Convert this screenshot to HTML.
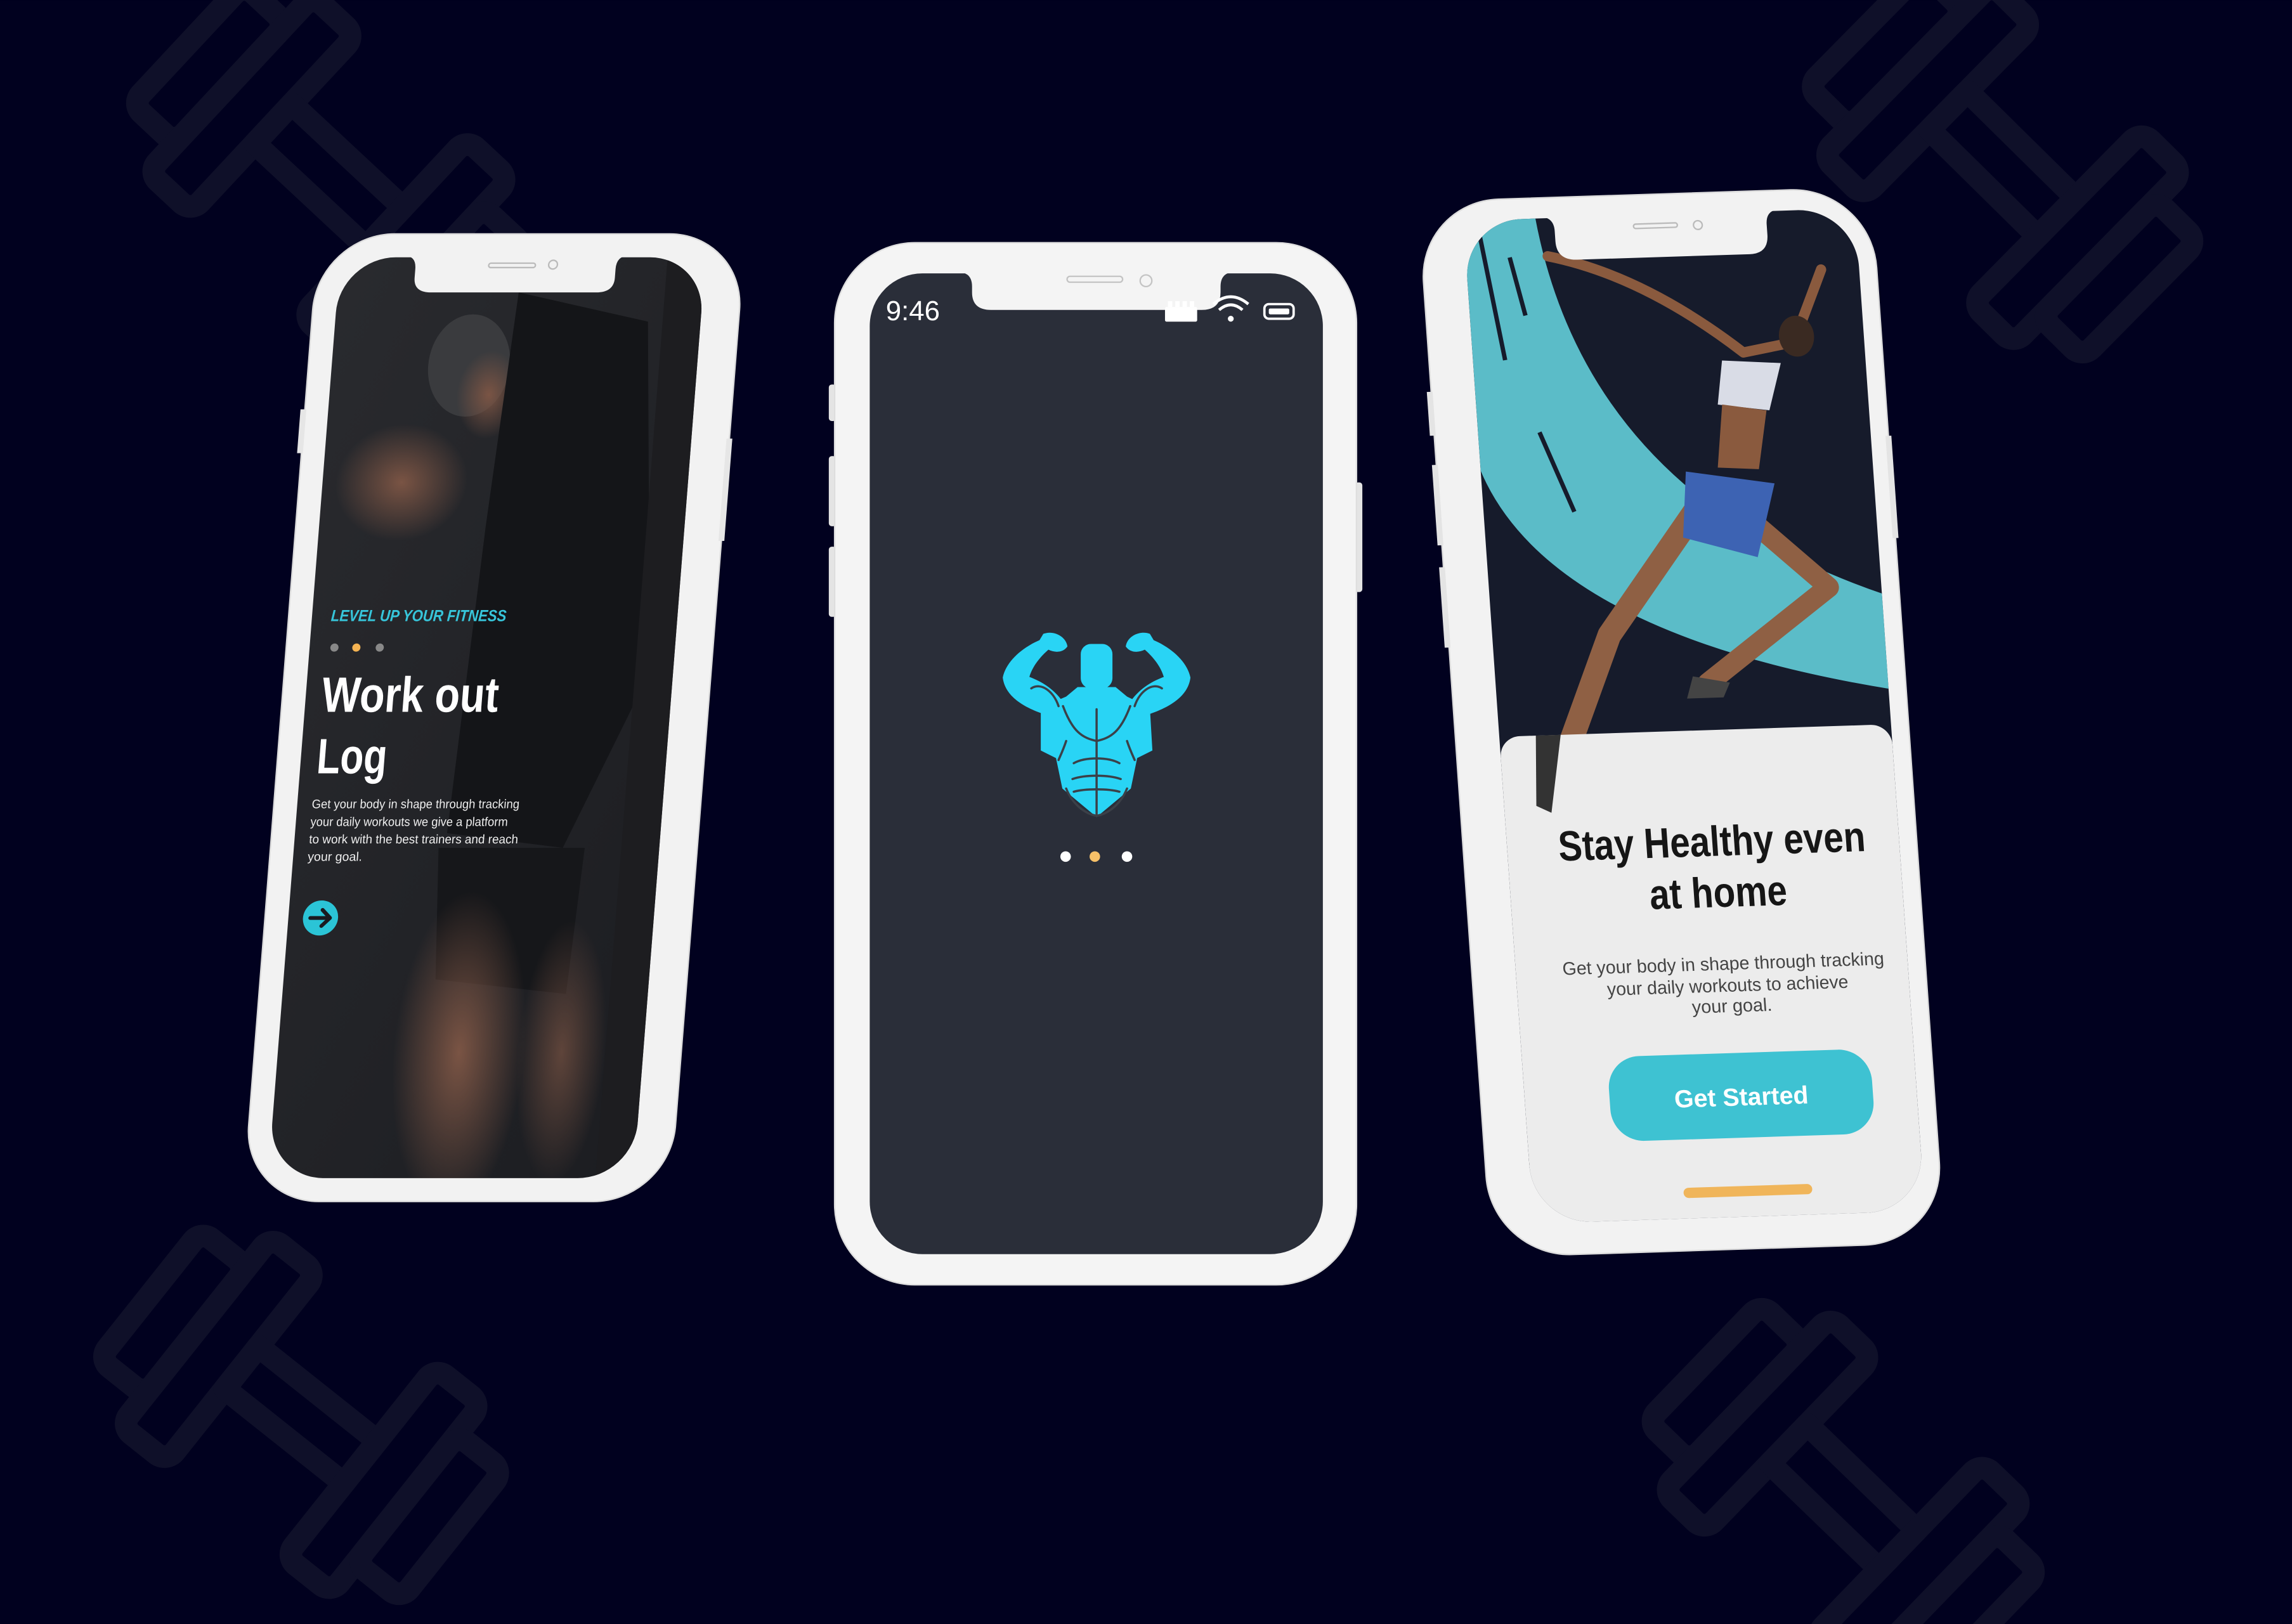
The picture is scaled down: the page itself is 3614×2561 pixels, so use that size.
<!DOCTYPE html>
<html><head><meta charset="utf-8"><style>
html,body{margin:0;padding:0;background:#01011f;width:3614px;height:2561px;overflow:hidden;}
svg{display:block;}
text{font-family:"Liberation Sans",sans-serif;}
</style></head><body>
<svg width="3614" height="2561" viewBox="0 0 1568 1111" xmlns="http://www.w3.org/2000/svg">
<defs>
<g id="db" fill="none" stroke="#0f1029" stroke-width="15.5" stroke-linejoin="round">
<rect x="-132" y="-56" width="40" height="112" rx="9"/>
<rect x="-92" y="-82.5" width="40" height="165" rx="9"/>
<rect x="-52" y="-18.5" width="104" height="37"/>
<rect x="52" y="-82.5" width="40" height="165" rx="9"/>
<rect x="92" y="-56" width="40" height="112" rx="9"/>
</g>
<clipPath id="lclip"><rect x="16" y="16" width="250" height="630" rx="38"/></clipPath>
<clipPath id="rclip"><rect x="30" y="14" width="268" height="686" rx="40"/></clipPath>
<radialGradient id="skin1" cx="0.5" cy="0.5" r="0.5"><stop offset="0" stop-color="#7a5444"/><stop offset="1" stop-color="#7a5444" stop-opacity="0"/></radialGradient>
<linearGradient id="lbg" x1="0" y1="0" x2="1" y2="1"><stop offset="0" stop-color="#2a2b2f"/><stop offset="1" stop-color="#1b1c20"/></linearGradient>
</defs>
<rect width="1568" height="1111" fill="#01011f"/>
<use href="#db" transform="translate(225,120) rotate(43)"/>
<use href="#db" transform="translate(1370,112) rotate(44.6)"/>
<use href="#db" transform="translate(206,968) rotate(38.5)"/>
<use href="#db" transform="translate(1261,1024) rotate(44)"/>

<!-- LEFT PHONE -->
<g transform="matrix(1,0,-0.0785,1,218,160)">
<rect x="0" y="0" width="292" height="662" rx="52" fill="#f2f2f2" stroke="#dcdcdc" stroke-width="1"/>
<rect x="-3" y="120" width="4" height="30" fill="#e6e6e6"/>
<rect x="290" y="140" width="4" height="70" fill="#e6e6e6"/>
<g clip-path="url(#lclip)">
<rect x="0" y="0" width="292" height="662" fill="url(#lbg)"/>
<ellipse cx="70" cy="170" rx="45" ry="40" fill="url(#skin1)"/>
<ellipse cx="110" cy="90" rx="28" ry="35" fill="#3a3b3e"/>
<ellipse cx="125" cy="110" rx="22" ry="30" fill="url(#skin1)"/>
<path d="M140,40 L230,60 L250,300 L200,420 L120,410 L130,200 Z" fill="#141518"/>
<path d="M115,420 L215,420 L210,520 L120,510 Z" fill="#16171a"/>
<ellipse cx="140" cy="560" rx="45" ry="110" fill="url(#skin1)"/>
<ellipse cx="210" cy="560" rx="30" ry="90" fill="url(#skin1)" opacity="0.7"/>
<rect x="240" y="0" width="30" height="662" fill="#1d1d20"/>
</g>
<path d="M60,15 Q68,15 68,24 L68,30 Q68,40 80,40 L193,40 Q205,40 205,30 L205,24 Q205,15 213,15 Z" fill="#f2f2f2"/>
<rect x="118" y="20" width="32" height="3" rx="1.5" fill="none" stroke="#bbb" stroke-width="1"/>
<circle cx="162" cy="21" r="3" fill="none" stroke="#bbb" stroke-width="1"/>
<text x="29" y="265" font-size="11" font-weight="bold" font-style="italic" fill="#37c5da" textLength="120" lengthAdjust="spacingAndGlyphs">LEVEL UP YOUR FITNESS</text>
<circle cx="33" cy="283" r="2.8" fill="#888"/>
<circle cx="48" cy="283" r="2.8" fill="#f5b352"/>
<circle cx="64" cy="283" r="2.8" fill="#888"/>
<text x="27" y="327" font-size="34" font-weight="bold" fill="#fff" textLength="121" lengthAdjust="spacingAndGlyphs">Work out</text>
<text x="27" y="369" font-size="34" font-weight="bold" fill="#fff" textLength="48" lengthAdjust="spacingAndGlyphs">Log</text>
<g font-size="8.5" fill="#eee">
<text x="26" y="393" textLength="142" lengthAdjust="spacingAndGlyphs">Get your body in shape through tracking</text>
<text x="26" y="405" textLength="135" lengthAdjust="spacingAndGlyphs">your daily workouts we give a platform</text>
<text x="26" y="417" textLength="143" lengthAdjust="spacingAndGlyphs">to work with the best trainers  and reach</text>
<text x="26" y="429">your goal.</text>
</g>
<circle cx="38" cy="468" r="12" fill="#2bc4d6"/>
<path d="M31,468 L44,468 M39,462.5 L44.5,468 L39,473.5" fill="none" stroke="#1a1a1f" stroke-width="2.6" stroke-linecap="round" stroke-linejoin="round"/>
</g>

<!-- CENTER PHONE -->
<rect x="567" y="263" width="5" height="25" rx="2" fill="#e4e4e4"/>
<rect x="567" y="312" width="5" height="48" rx="2" fill="#e4e4e4"/>
<rect x="567" y="374" width="5" height="48" rx="2" fill="#e4e4e4"/>
<rect x="927" y="330" width="5" height="75" rx="2" fill="#e4e4e4"/>
<rect x="571" y="166" width="357" height="713" rx="55" fill="#f4f4f4" stroke="#dedede" stroke-width="1"/>
<rect x="595" y="187" width="310" height="671" rx="36" fill="#2a2e39"/>
<path d="M655,186 Q665,186 665,196 L665,200 Q665,212 678,212 L822,212 Q835,212 835,200 L835,196 Q835,186 845,186 Z" fill="#f4f4f4"/>
<rect x="730" y="189" width="38" height="4" rx="2" fill="none" stroke="#c4c4c4" stroke-width="1"/>
<circle cx="784" cy="192" r="4" fill="none" stroke="#c4c4c4" stroke-width="1"/>
<text x="606" y="219" font-size="19" fill="#fff">9:46</text>
<g fill="#fff">
<rect x="797" y="210" width="22" height="10" rx="1"/>
<rect x="799" y="206" width="3" height="4"/><rect x="804" y="206" width="3" height="4"/><rect x="809" y="206" width="3" height="4"/><rect x="814" y="206" width="3" height="4"/>
<circle cx="842" cy="218" r="2"/>
<path d="M834,212 Q842,205 850,212" fill="none" stroke="#fff" stroke-width="2"/>
<path d="M830,208 Q842,198 854,208" fill="none" stroke="#fff" stroke-width="2"/>
<rect x="865" y="208" width="20" height="10" rx="3" fill="none" stroke="#fff" stroke-width="1.6"/>
<rect x="868" y="211" width="14" height="4" rx="1"/>
</g>
<!-- logo -->
<g transform="translate(686,431) scale(0.4338)">
<g fill="#29d4f5">
<rect x="123" y="22" width="50" height="70" rx="16"/>
<path d="M118,90 L178,90 L196,105 L232,122 L236,190 L212,202 L202,250 L148,295 L94,250 L84,202 L60,190 L60,122 L100,105 Z"/>
<path d="M72,135 C40,125 4,108 0,75 C5,50 30,28 58,16 L64,6 C80,0 100,10 102,26 C95,36 82,36 72,31 C56,45 46,60 42,74 C58,80 78,90 94,112 Z"/>
<path d="M224,135 C256,125 292,108 296,75 C291,50 266,28 238,16 L232,6 C216,0 196,10 194,26 C201,36 214,36 224,31 C240,45 250,60 254,74 C238,80 218,90 202,112 Z"/>
</g>
<g fill="none" stroke="#3b4048" stroke-width="3.5" stroke-linecap="round">
<path d="M95,120 C110,160 125,170 148,175 C171,170 186,160 201,120"/>
<path d="M148,125 L148,290"/>
<path d="M112,210 C130,200 166,200 184,210"/>
<path d="M110,235 C130,228 166,228 186,235"/>
<path d="M112,255 C130,250 166,250 184,255"/>
<path d="M100,250 C110,275 130,290 148,293 C166,290 186,275 196,250"/>
<path d="M45,92 C60,82 80,96 88,120"/>
<path d="M251,92 C236,82 216,96 208,120"/>
<path d="M100,175 C95,190 90,200 88,205"/>
<path d="M196,175 C201,190 206,200 208,205"/>
</g>
</g>
<circle cx="729" cy="586" r="3.6" fill="#fff"/>
<circle cx="749" cy="586" r="3.6" fill="#f6c068"/>
<circle cx="771" cy="586" r="3.6" fill="#fff"/>

<!-- RIGHT PHONE -->
<g transform="matrix(1,-0.032,0.07,1,970,138)">
<rect x="0" y="0" width="310" height="722" rx="55" fill="#f2f2f2" stroke="#dcdcdc" stroke-width="1"/>
<rect x="-3" y="130" width="4" height="30" fill="#e4e4e4"/>
<rect x="-3" y="180" width="4" height="55" fill="#e4e4e4"/>
<rect x="-3" y="250" width="4" height="55" fill="#e4e4e4"/>
<rect x="308" y="170" width="4" height="70" fill="#e4e4e4"/>
<g clip-path="url(#rclip)">
<rect x="0" y="0" width="310" height="722" fill="#161b2b"/>
<path d="M30,0 L78,0 Q95,205 310,282 L310,345 Q70,300 30,185 Z" fill="#5bbcc8"/>
<path d="M40,20 L52,110 M60,40 L68,80 M72,160 L92,215" stroke="#161b2b" stroke-width="3" fill="none"/>
<g fill="none" stroke-linecap="round" stroke-linejoin="round">
<path d="M86,40 Q150,55 215,110 L250,104 L272,55" stroke="#8a5a3e" stroke-width="7"/>
<path d="M186,200 L262,272 L175,335" stroke="#8f6044" stroke-width="14"/>
<path d="M180,210 L110,300 L62,410" stroke="#8f6044" stroke-width="16"/>
</g>
<ellipse cx="252" cy="100" rx="12" ry="14" fill="#3a2a22"/>
<path d="M200,115 L240,118 L230,150 L195,145 Z" fill="#d9dce6"/>
<path d="M198,145 L228,150 L220,190 L192,188 Z" fill="#8a5a3e"/>
<path d="M170,190 L230,200 L215,250 L165,235 Z" fill="#3d63b3"/>
<path d="M165,330 L190,335 L185,345 L160,345 Z" fill="#444"/>
<rect x="30" y="367" width="268" height="340" rx="14" fill="#ececec"/>
<path d="M55,367 L72,367 L62,420 L52,415 Z" fill="#333"/>
</g>
<path d="M82,13 Q92,13 92,23 L92,30 Q92,43 106,43 L224,43 Q237,43 237,30 L237,23 Q237,13 247,13 Z" fill="#f2f2f2"/>
<rect x="146" y="20" width="30" height="3" rx="1.5" fill="none" stroke="#bbb" stroke-width="1"/>
<circle cx="190" cy="22" r="3" fill="none" stroke="#bbb" stroke-width="1"/>
<text x="170" y="453" font-size="29" font-weight="bold" fill="#161616" text-anchor="middle" textLength="210" lengthAdjust="spacingAndGlyphs">Stay Healthy even</text>
<text x="172" y="488" font-size="29" font-weight="bold" fill="#161616" text-anchor="middle" textLength="94" lengthAdjust="spacingAndGlyphs">at home</text>
<g font-size="12.5" fill="#444" text-anchor="middle">
<text x="172" y="531" textLength="220" lengthAdjust="spacingAndGlyphs">Get your body in shape through tracking</text>
<text x="174" y="546" textLength="165" lengthAdjust="spacingAndGlyphs">your daily workouts to achieve</text>
<text x="176" y="560">your goal.</text>
</g>
<rect x="88" y="588" width="180" height="58" rx="22" fill="#3ec2d2"/>
<text x="178" y="624" font-size="17" font-weight="bold" fill="#fff" text-anchor="middle">Get Started</text>
<rect x="134" y="679" width="88" height="7" rx="3.5" fill="#f0b55a"/>
</g>
</svg>
</body></html>
